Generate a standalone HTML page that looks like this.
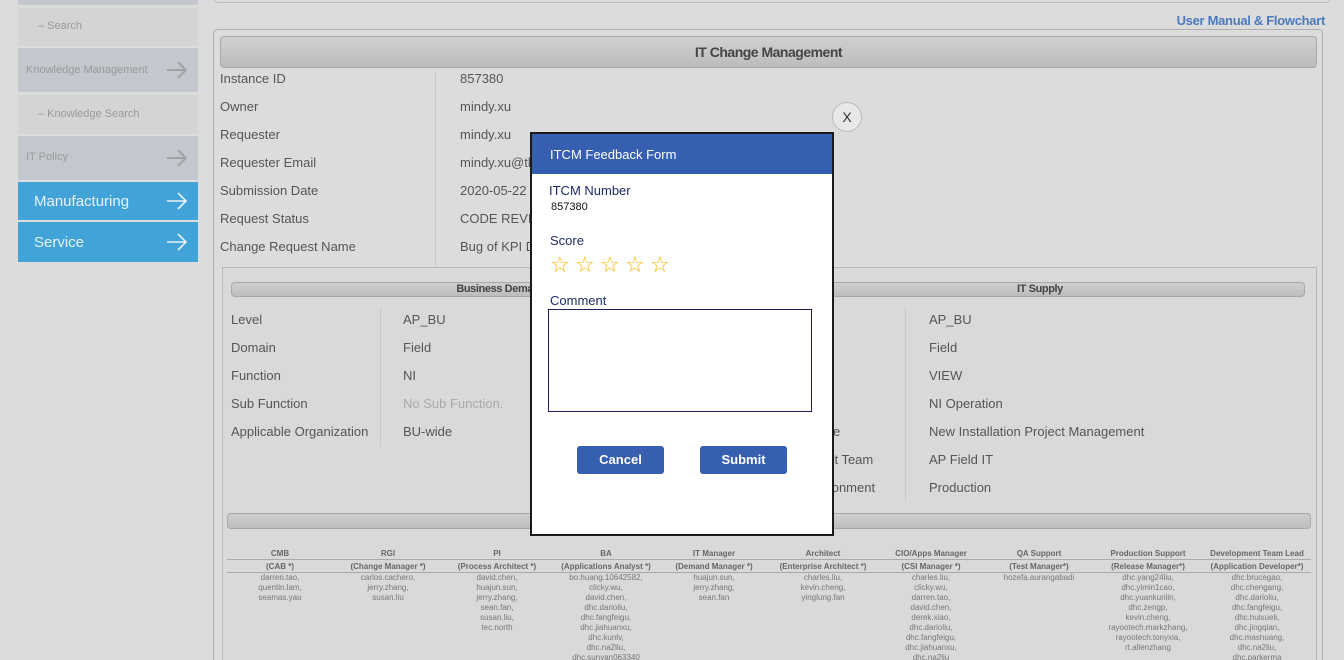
<!DOCTYPE html>
<html><head><meta charset="utf-8"><style>
*{margin:0;padding:0;box-sizing:border-box}
html,body{width:1344px;height:660px;overflow:hidden}
body{background:#dcdcdc;font-family:"Liberation Sans",sans-serif;color:#555}
#wrap{position:relative;width:1344px;height:660px;overflow:hidden}
.abs{position:absolute}
.sb{position:absolute;left:18px;width:180px;color:#999;font-size:11px}
.sb .ar{position:absolute;right:10px;top:50%;margin-top:-9px}
.gbar{position:absolute;background:linear-gradient(#d0d0d0,#bcbcbc);border:1px solid #a8a8a8;border-radius:4px}
.lbl{position:absolute;font-size:13px;color:#555;white-space:nowrap}
.col{position:absolute;width:108px;text-align:center;font-size:8px;color:#777;line-height:10px}
.col b{display:block;color:#666;font-size:8px;line-height:13px}
.st{display:inline-block;width:25px}
</style></head><body><div id="wrap">
<div class="abs" style="left:214px;top:-10px;width:1116px;height:13px;border:1px solid #bbb;border-radius:4px"></div>
<div class="sb" style="top:0;height:5px;background:#c4c7cd"></div>
<div class="sb" style="top:8px;height:38px;background:#d3d4d6"><span class="abs" style="left:20px;top:12px">– Search</span></div>
<div class="sb" style="top:48px;height:44px;background:#c4c7cd"><span class="abs" style="left:8px;top:16px">Knowledge Management</span><svg class="ar" width="22" height="18" viewBox="0 0 22 18"><path d="M1 9H20M12 1L20 9L12 17" stroke="#a3a3a3" stroke-width="2" fill="none"/></svg></div>
<div class="sb" style="top:95px;height:39px;background:#d3d4d6"><span class="abs" style="left:20px;top:13px">– Knowledge Search</span></div>
<div class="sb" style="top:136px;height:44px;background:#c4c7cd"><span class="abs" style="left:8px;top:15px">IT Policy</span><svg class="ar" width="22" height="18" viewBox="0 0 22 18"><path d="M1 9H20M12 1L20 9L12 17" stroke="#a3a3a3" stroke-width="2" fill="none"/></svg></div>
<div class="sb" style="top:182px;height:38px;background:#42a3d8;color:#e8f3fa;font-size:15px"><span class="abs" style="left:16px;top:11px">Manufacturing</span><svg class="ar" width="22" height="18" viewBox="0 0 22 18"><path d="M1 9H20M12 1L20 9L12 17" stroke="#e8f3fa" stroke-width="1.6" fill="none"/></svg></div>
<div class="sb" style="top:222px;height:40px;background:#42a3d8;color:#e8f3fa;font-size:15px"><span class="abs" style="left:16px;top:12px">Service</span><svg class="ar" width="22" height="18" viewBox="0 0 22 18"><path d="M1 9H20M12 1L20 9L12 17" stroke="#e8f3fa" stroke-width="1.6" fill="none"/></svg></div>

<div class="abs" style="right:19px;top:13px;font-size:13px;font-weight:bold;color:#4a7bbd;letter-spacing:-0.3px">User Manual &amp; Flowchart</div>
<div class="abs" style="left:213px;top:29px;width:1110px;height:660px;border:1px solid #b0b0b0;border-radius:4px"></div>
<div class="gbar" style="left:220px;top:36px;width:1097px;height:32px;text-align:center;font-size:14px;font-weight:bold;line-height:30px;color:#444;letter-spacing:-0.5px">IT Change Management</div>
<div class="abs" style="left:435px;top:71px;width:1px;height:196px;background:#c8c8c8"></div>
<div class="lbl" style="left:220px;top:71px">Instance ID</div><div class="lbl" style="left:460px;top:71px">857380</div>
<div class="lbl" style="left:220px;top:99px">Owner</div><div class="lbl" style="left:460px;top:99px">mindy.xu</div>
<div class="lbl" style="left:220px;top:127px">Requester</div><div class="lbl" style="left:460px;top:127px">mindy.xu</div>
<div class="lbl" style="left:220px;top:155px">Requester Email</div><div class="lbl" style="left:460px;top:155px">mindy.xu@tk</div>
<div class="lbl" style="left:220px;top:183px">Submission Date</div><div class="lbl" style="left:460px;top:183px">2020-05-22</div>
<div class="lbl" style="left:220px;top:211px">Request Status</div><div class="lbl" style="left:460px;top:211px">CODE REVIEW</div>
<div class="lbl" style="left:220px;top:239px">Change Request Name</div><div class="lbl" style="left:460px;top:239px">Bug of KPI D</div>
<div class="abs" style="left:222px;top:267px;width:1095px;height:420px;border:1px solid #b8b8b8;background:#d8d9da"></div>
<div class="gbar" style="left:231px;top:282px;width:540px;height:15px;text-align:center;font-size:11px;font-weight:bold;line-height:13px;color:#444;letter-spacing:-0.4px">Business Demand</div>
<div class="gbar" style="left:775px;top:282px;width:530px;height:15px;font-size:11px;font-weight:bold;line-height:13px;color:#444;letter-spacing:-0.4px"><span class="abs" style="left:241px;top:0">IT Supply</span></div>
<div class="abs" style="left:380px;top:307px;width:1px;height:140px;background:#c8c8c8"></div>
<div class="abs" style="left:905px;top:307px;width:1px;height:195px;background:#c8c8c8"></div>
<div class="lbl" style="left:231px;top:312px">Level</div><div class="lbl" style="left:403px;top:312px">AP_BU</div><div class="lbl" style="left:929px;top:312px">AP_BU</div>
<div class="lbl" style="left:231px;top:340px">Domain</div><div class="lbl" style="left:403px;top:340px">Field</div><div class="lbl" style="left:929px;top:340px">Field</div>
<div class="lbl" style="left:231px;top:368px">Function</div><div class="lbl" style="left:403px;top:368px">NI</div><div class="lbl" style="left:929px;top:368px">VIEW</div>
<div class="lbl" style="left:231px;top:396px">Sub Function</div><div class="lbl" style="left:403px;top:396px;color:#aaa">No Sub Function.</div><div class="lbl" style="left:929px;top:396px">NI Operation</div>
<div class="lbl" style="left:231px;top:424px">Applicable Organization</div><div class="lbl" style="left:403px;top:424px">BU-wide</div><div class="lbl" style="left:833px;top:424px">e</div><div class="lbl" style="left:929px;top:424px">New Installation Project Management</div>
<div class="lbl" style="left:820px;top:452px">ent Team</div><div class="lbl" style="left:929px;top:452px">AP Field IT</div>
<div class="lbl" style="left:818px;top:480px">vironment</div><div class="lbl" style="left:929px;top:480px">Production</div>
<div class="gbar" style="left:227px;top:513px;width:1084px;height:16px"></div>
<div class="abs" style="left:227px;top:559px;width:1084px;height:1px;background:#aaa"></div>
<div class="abs" style="left:227px;top:572px;width:1084px;height:1px;background:#aaa"></div>
<div class="col" style="left:226px;top:547px"><b>CMB</b><b>(CAB *)</b>darren.tao,<br>quentin.lam,<br>seamas.yau</div>
<div class="col" style="left:334px;top:547px"><b>RGI</b><b>(Change Manager *)</b>carlos.cachero,<br>jerry.zhang,<br>susan.liu</div>
<div class="col" style="left:443px;top:547px"><b>PI</b><b>(Process Architect *)</b>david.chen,<br>huajun.sun,<br>jerry.zhang,<br>sean.fan,<br>susan.liu,<br>tec.north</div>
<div class="col" style="left:552px;top:547px"><b>BA</b><b>(Applications Analyst *)</b>bo.huang.10642582,<br>clicky.wu,<br>david.chen,<br>dhc.darioliu,<br>dhc.fangfeigu,<br>dhc.jiahuanxu,<br>dhc.kunlv,<br>dhc.na2liu,<br>dhc.sunyan063340</div>
<div class="col" style="left:660px;top:547px"><b>IT Manager</b><b>(Demand Manager *)</b>huajun.sun,<br>jerry.zhang,<br>sean.fan</div>
<div class="col" style="left:769px;top:547px"><b>Architect</b><b>(Enterprise Architect *)</b>charles.liu,<br>kevin.cheng,<br>yinglung.fan</div>
<div class="col" style="left:877px;top:547px"><b>CIO/Apps Manager</b><b>(CSI Manager *)</b>charles.liu,<br>clicky.wu,<br>darren.tao,<br>david.chen,<br>derek.xiao,<br>dhc.darioliu,<br>dhc.fangfeigu,<br>dhc.jiahuanxu,<br>dhc.na2liu</div>
<div class="col" style="left:985px;top:547px"><b>QA Support</b><b>(Test Manager*)</b>hozefa.aurangabadi</div>
<div class="col" style="left:1094px;top:547px"><b>Production Support</b><b>(Release Manager*)</b>dhc.yang24liu,<br>dhc.yimin1cao,<br>dhc.yuankunlin,<br>dhc.zengp,<br>kevin.cheng,<br>rayootech.markzhang,<br>rayootech.tonyxia,<br>rt.allenzhang</div>
<div class="col" style="left:1203px;top:547px"><b>Development Team Lead</b><b>(Application Developer*)</b>dhc.brucegao,<br>dhc.chengang,<br>dhc.darioliu,<br>dhc.fangfeigu,<br>dhc.huixueli,<br>dhc.jingqian,<br>dhc.mashuang,<br>dhc.na2liu,<br>dhc.parkerma</div>

<div class="abs" style="left:832px;top:102px;width:30px;height:30px;border-radius:50%;background:#e8e8e8;border:1px solid #bbb;text-align:center;line-height:28px;font-size:14px;color:#333">X</div>
<div class="abs" style="left:530px;top:132px;width:304px;height:404px;background:#fff;border:2px solid #1a1a1a;font-family:'Liberation Sans',sans-serif">
 <div style="height:40px;background:#375fb0;color:#fff;font-size:13px;line-height:42px;padding-left:18px">ITCM Feedback Form</div>
 <div class="abs" style="left:17px;top:49px;font-size:13px;color:#1d2b66">ITCM Number</div>
 <div class="abs" style="left:19px;top:67px;font-size:11px;color:#111">857380</div>
 <div class="abs" style="left:18px;top:99px;font-size:13px;color:#1d2b66">Score</div>
 <div class="abs" style="left:18px;top:120px;font-size:22px;line-height:24px;color:#f5b800;font-family:'DejaVu Sans',sans-serif;white-space:nowrap"><span class="st">☆</span><span class="st">☆</span><span class="st">☆</span><span class="st">☆</span><span class="st">☆</span></div>
 <div class="abs" style="left:18px;top:159px;font-size:13px;color:#1d2b66">Comment</div>
 <div class="abs" style="left:16px;top:175px;width:264px;height:103px;border:1px solid #1b2160"></div>
 <div class="abs" style="left:45px;top:312px;width:87px;height:28px;background:#375fb0;border-radius:3px;color:#fff;font-size:13px;font-weight:bold;text-align:center;line-height:28px">Cancel</div>
 <div class="abs" style="left:168px;top:312px;width:87px;height:28px;background:#375fb0;border-radius:3px;color:#fff;font-size:13px;font-weight:bold;text-align:center;line-height:28px">Submit</div>
</div>
</div></body></html>
